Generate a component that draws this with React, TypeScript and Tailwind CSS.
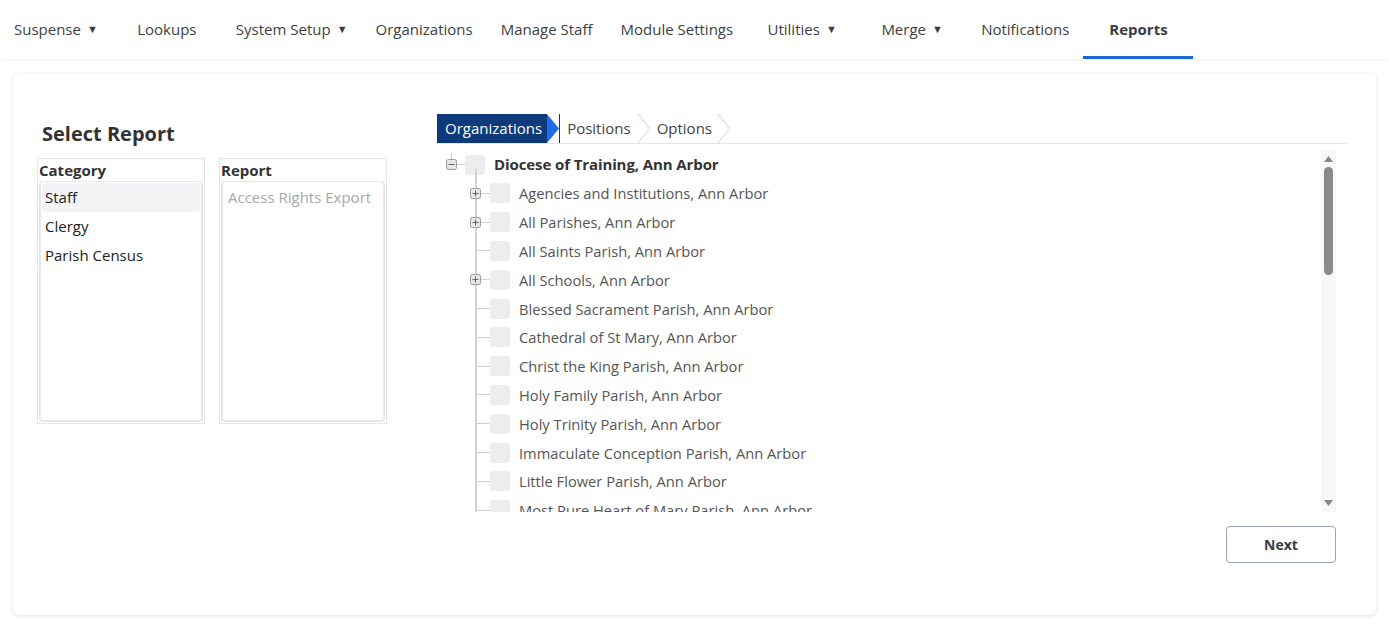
import { useState } from "react";

const navItems = [
  { label: "Suspense", caret: true },
  { label: "Lookups" },
  { label: "System Setup", caret: true },
  { label: "Organizations" },
  { label: "Manage Staff" },
  { label: "Module Settings" },
  { label: "Utilities", caret: true },
  { label: "Merge", caret: true },
  { label: "Notifications" },
  { label: "Reports", active: true },
];

const categories = ["Staff", "Clergy", "Parish Census"];

const orgs = [
  { name: "Agencies and Institutions, Ann Arbor", kids: true },
  { name: "All Parishes, Ann Arbor", kids: true },
  { name: "All Saints Parish, Ann Arbor" },
  { name: "All Schools, Ann Arbor", kids: true },
  { name: "Blessed Sacrament Parish, Ann Arbor" },
  { name: "Cathedral of St Mary, Ann Arbor" },
  { name: "Christ the King Parish, Ann Arbor" },
  { name: "Holy Family Parish, Ann Arbor" },
  { name: "Holy Trinity Parish, Ann Arbor" },
  { name: "Immaculate Conception Parish, Ann Arbor" },
  { name: "Little Flower Parish, Ann Arbor" },
  { name: "Most Pure Heart of Mary Parish, Ann Arbor" },
];

function ToggleIcon({ open }: { open?: boolean }) {
  return (
    <svg width="11" height="11" viewBox="0 0 11 11" className="shrink-0">
      <rect x="0.5" y="0.5" width="10" height="10" rx="2" fill="#e6e6e6" stroke="#9a9a9a" />
      <line x1="2.5" y1="5.5" x2="8.5" y2="5.5" stroke="#666" strokeWidth="1" />
      {!open && <line x1="5.5" y1="2.5" x2="5.5" y2="8.5" stroke="#666" strokeWidth="1" />}
    </svg>
  );
}

function Chevron() {
  return (
    <svg width="14" height="29" viewBox="0 0 14 29" className="shrink-0">
      <polyline points="1,0 13,14.5 1,29" fill="none" stroke="#cfcfcf" strokeWidth="1" />
    </svg>
  );
}

function ListBox({ title, children }: { title: string; children: React.ReactNode }) {
  return (
    <div className="w-[168px] h-[266px] border border-[#e6e6e6] flex flex-col">
      <div className="text-[15px] font-bold text-[#333] leading-[22px] pl-px">{title}</div>
      <div className="flex-1 mx-px mb-px border-2 border-t border-[#e8e8e8] rounded-[4px] p-px">
        {children}
      </div>
    </div>
  );
}

export default function App() {
  const [cat, setCat] = useState("Staff");

  return (
    <div className="min-h-screen bg-white font-['Open_Sans',sans-serif] text-[#333]">
      <header className="h-[59px] bg-white shadow-[0_1px_3px_rgba(0,0,0,0.08)] flex items-stretch">
        {navItems.map((n) => (
          <a
            key={n.label}
            className={`min-w-[110px] px-[14px] pt-[3px] flex items-center justify-center text-[15px] whitespace-nowrap border-b-[3px] ${
              n.active ? "font-bold text-[#3a3d42] border-[#1b66d6]" : "text-[#3c3f44] border-transparent"
            }`}
          >
            {n.label}
            {n.caret && <span className="ml-[6px] text-[11px]">▼</span>}
          </a>
        ))}
      </header>

      <main className="px-[13px] pt-[14px]">
        <div className="h-[542px] rounded-[6px] bg-white shadow-[0_1px_4px_rgba(0,0,0,0.12)] pl-[24px] pr-[29px] pt-[41px] flex">
          <section className="w-[400px] shrink-0 pt-[7px]">
            <h2 className="text-[20px] font-bold text-[#333] leading-[26px] pl-[5px]">Select Report</h2>
            <div className="mt-[11px] flex gap-[14px]">
              <ListBox title="Category">
                {categories.map((c) => (
                  <div
                    key={c}
                    onClick={() => setCat(c)}
                    className={`h-[29px] flex items-center px-[3px] rounded-[3px] text-[15px] text-[#222] ${
                      cat === c ? "bg-[#f4f4f6]" : ""
                    }`}
                  >
                    {c}
                  </div>
                ))}
              </ListBox>
              <ListBox title="Report">
                <div className="h-[29px] flex items-center px-[4px] text-[15px] text-[#a8a8a8]">Access Rights Export</div>
              </ListBox>
            </div>
          </section>

          <section className="flex-1 flex flex-col">
            <div className="h-[30px] flex items-stretch border-b border-[#e6e6e6]">
              <div className="bg-[#0e3a7c] text-white text-[15px] flex items-center pl-[8px] pr-[5px]">Organizations</div>
              <svg width="12" height="29" viewBox="0 0 12 29" className="shrink-0">
                <polygon points="0,0 12,14.5 0,29" fill="#1c6fe8" />
              </svg>
              <div className="w-px bg-[#0e3a7c]" />
              <div className="text-[15px] text-[#444] flex items-center pl-[7px] pr-[6px]">Positions</div>
              <Chevron />
              <div className="text-[15px] text-[#444] flex items-center pl-[6px] pr-[5px]">Options</div>
              <Chevron />
            </div>

            <div className="mt-[6px] h-[362px] flex pr-[11px]">
              <div className="flex-1 overflow-hidden relative">
                <div className="flex items-center h-[29px] pl-[9px]">
                  <div className="relative flex items-center">
                    <span className="absolute left-[5px] -top-[6px] w-px h-[6px] bg-[#cfcfcf]" />
                    <ToggleIcon open />
                  </div>
                  <span className="w-[8px] h-px bg-[#cfcfcf]" />
                  <span className="w-[20px] h-[20px] rounded-[3px] bg-[#ededee]" />
                  <span className="ml-[9px] text-[15px] font-bold text-[#333] tracking-[-0.1px]">Diocese of Training, Ann Arbor</span>
                </div>
                <div className="relative">
                  <span className="absolute left-[38px] -top-[10px] bottom-0 w-[2px] bg-[#d4d4d4]" />
                  {orgs.map((o) => (
                    <div key={o.name} className="relative flex items-center h-[28.8px] pl-[33px]">
                      {o.kids ? <ToggleIcon /> : <span className="w-[11px]" />}
                      <span className={`h-px bg-[#cfcfcf] ${o.kids ? "w-[9px]" : "w-[14px] -ml-[5px]"}`} />
                      <span className="w-[20px] h-[20px] rounded-[3px] bg-[#ededee]" />
                      <span className="ml-[9px] text-[14.7px] text-[#555] whitespace-nowrap">{o.name}</span>
                    </div>
                  ))}
                </div>
              </div>
              <div className="w-[15px] bg-[#f8f8f8] flex flex-col items-center py-[6px]">
                <svg width="9" height="6" viewBox="0 0 9 6">
                  <polygon points="4.5,0 9,6 0,6" fill="#888" />
                </svg>
                <div className="mt-[5px] w-[9px] h-[108px] rounded-full bg-[#8a8a8a]" />
                <div className="flex-1" />
                <svg width="9" height="6" viewBox="0 0 9 6">
                  <polygon points="0,0 9,0 4.5,6" fill="#888" />
                </svg>
              </div>
            </div>

            <div className="mt-[14px] flex justify-end pr-[11px]">
              <button className="w-[110px] h-[37px] border border-[#9aa0ad] rounded-[4px] text-[14px] font-bold text-[#3a3d42] bg-white">
                Next
              </button>
            </div>
          </section>
        </div>
      </main>
    </div>
  );
}
